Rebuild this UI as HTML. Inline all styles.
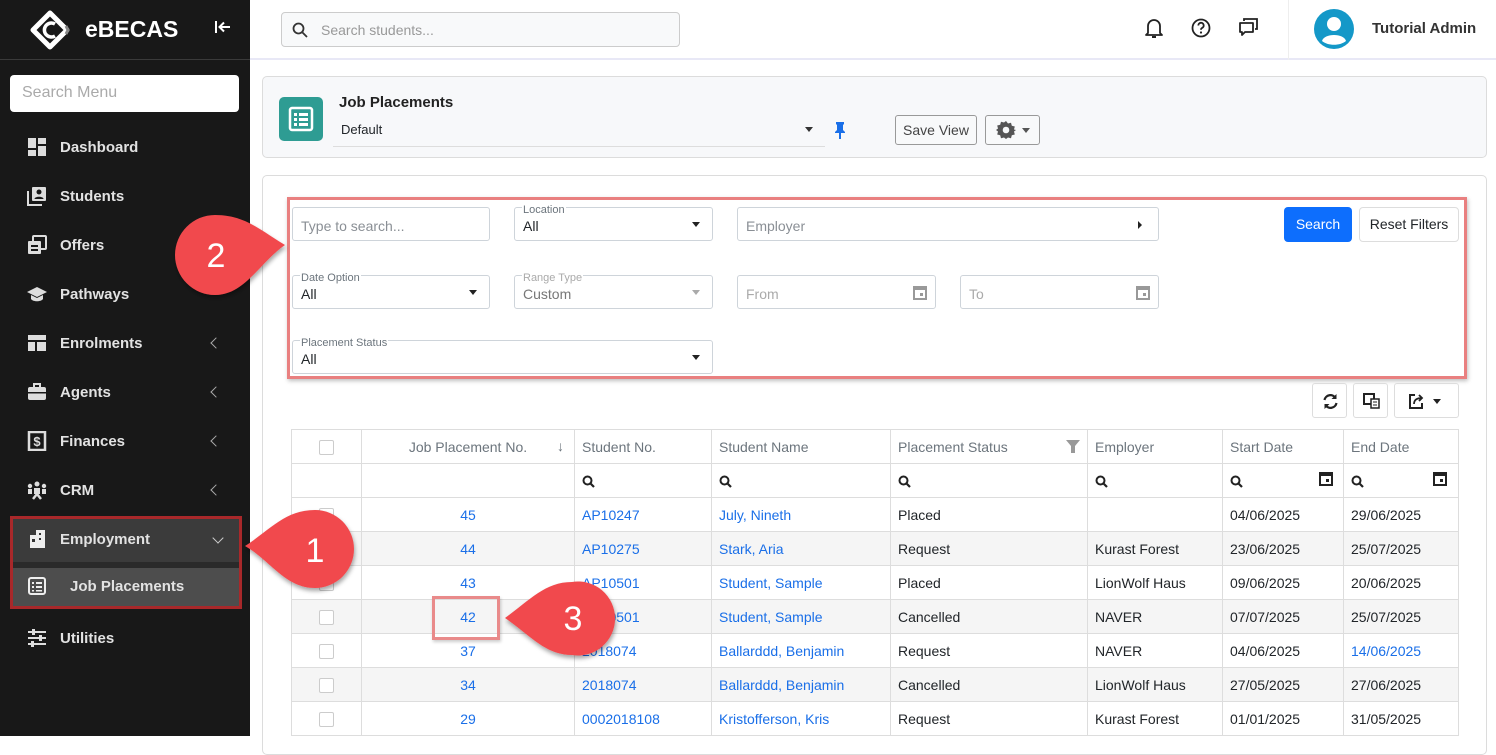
<!DOCTYPE html>
<html><head><meta charset="utf-8"><style>
*{box-sizing:border-box;margin:0;padding:0}
body{width:1496px;height:736px;overflow:hidden;font-family:"Liberation Sans",sans-serif;font-size:14px;color:#212529;background:#fff;position:relative}
.a{position:absolute}
#side{left:0;top:0;width:250px;height:736px;background:#181818;color:#e6e6e6}
.mi{position:absolute;left:27px;font-size:15px;font-weight:bold;color:#e2e2e2;display:flex;align-items:center}
.mi svg{width:20px;height:20px;margin-right:13px}
.chev{position:absolute;left:212px;width:8px;height:8px;border-left:1.5px solid #aaa;border-bottom:1.5px solid #aaa;transform:rotate(45deg)}
.inp{position:absolute;border:1px solid #ced4da;border-radius:3px;background:#fff;height:34px}
.lbl{position:absolute;top:-8px;left:7px;font-size:11px;color:#6c757d;background:#fff;padding:0 1px;line-height:13px}
.val{position:absolute;left:8px;top:10px;font-size:14px;color:#212529}
.ph{color:#8a8f95}
.caret{position:absolute;right:12px;top:14px;width:0;height:0;border-left:4px solid transparent;border-right:4px solid transparent;border-top:5px solid #222}
table{border-collapse:collapse;position:absolute;left:291px;top:429px;width:1167px;table-layout:fixed}
td{border:1px solid #ddd;height:34px;padding:0 7px;font-size:14px;white-space:nowrap;overflow:hidden}
thead td{color:#6c757d}
tr.g td{background:#f5f5f5}
.lnk{color:#1a6fe8}
.cb{display:inline-block;width:15px;height:15px;border:1px solid #ccc;border-radius:2px;background:#fff;vertical-align:middle}
.btn{position:absolute;border:1px solid #999;border-radius:3px;background:#f8f9fa;display:flex;align-items:center;justify-content:center}
.q{vertical-align:middle}
</style></head><body>
<div id="side" class="a">
 <svg class="a" style="left:30px;top:10px" width="40" height="40" viewBox="0 0 40 40"><path d="M20 3 L37 20 L20 37 L3 20 Z" fill="none" stroke="#fff" stroke-width="5" stroke-linejoin="round"/><path d="M25 14 A7 7 0 1 0 25 26" fill="none" stroke="#fff" stroke-width="3.5"/><path d="M36 16 L38 20 L36 24" stroke="#888" stroke-width="3" fill="none"/></svg>
 <div class="a" style="left:85px;top:16px;font-size:23px;font-weight:bold;color:#fff">eBECAS</div>
 <svg class="a" style="left:214px;top:20px" width="18" height="14" viewBox="0 0 18 14"><path d="M2 1v12" stroke="#fff" stroke-width="2"/><path d="M16 7H6M10 2.5L5.5 7 10 11.5" stroke="#fff" stroke-width="2" fill="none"/></svg>
 <div class="a" style="left:0;top:59px;width:250px;height:1px;background:#3a3a3a"></div>
 <div class="a" style="left:10px;top:75px;width:229px;height:37px;background:#fff;border-radius:4px;padding:9px 12px;color:#aaa;font-size:16px">Search Menu</div>
 <div class="mi" style="top:137px"><svg viewBox="0 0 20 20"><rect x="1" y="1" width="8" height="10" fill="#ddd"/><rect x="11" y="1" width="8" height="6" fill="#ddd"/><rect x="1" y="13" width="8" height="6" fill="#ddd"/><rect x="11" y="9" width="8" height="10" fill="#ddd"/></svg>Dashboard</div>
 <div class="mi" style="top:186px"><svg viewBox="0 0 20 20"><rect x="5" y="1" width="14" height="14" rx="1" fill="#ddd"/><path d="M1 5v14h14" stroke="#ddd" stroke-width="2" fill="none"/><circle cx="12" cy="6" r="2.5" fill="#181818"/><path d="M7.5 13c0-3 9-3 9 0z" fill="#181818"/></svg>Students</div>
 <div class="mi" style="top:235px"><svg viewBox="0 0 20 20"><rect x="6" y="1" width="13" height="13" rx="1" fill="none" stroke="#ddd" stroke-width="2"/><rect x="1" y="6" width="13" height="13" rx="1" fill="#ddd"/><rect x="4" y="10" width="7" height="2" fill="#181818"/><rect x="4" y="14" width="7" height="2" fill="#181818"/></svg>Offers</div>
 <div class="mi" style="top:284px"><svg viewBox="0 0 20 20"><path d="M10 3 L20 8 L10 13 L0 8 Z" fill="#ddd"/><path d="M4 11v4c2 3 10 3 12 0v-4l-6 3z" fill="#ddd"/></svg>Pathways</div>
 <div class="mi" style="top:333px"><svg viewBox="0 0 20 20"><rect x="1" y="2" width="18" height="5" fill="#ddd"/><rect x="1" y="9" width="7" height="9" fill="#ddd"/><rect x="10" y="9" width="9" height="9" fill="#ddd"/></svg>Enrolments</div><div class="chev" style="top:339px"></div>
 <div class="mi" style="top:382px"><svg viewBox="0 0 20 20"><rect x="1" y="5" width="18" height="13" rx="2" fill="#ddd"/><rect x="7" y="2" width="6" height="4" fill="none" stroke="#ddd" stroke-width="2"/><rect x="1" y="10" width="18" height="1.5" fill="#181818"/></svg>Agents</div><div class="chev" style="top:388px"></div>
 <div class="mi" style="top:431px"><svg viewBox="0 0 20 20"><rect x="2" y="1" width="16" height="18" fill="none" stroke="#ddd" stroke-width="2.5"/><text x="10" y="15" font-size="13" font-weight="bold" fill="#ddd" text-anchor="middle" font-family="Liberation Sans">$</text></svg>Finances</div><div class="chev" style="top:437px"></div>
 <div class="mi" style="top:480px"><svg viewBox="0 0 20 20"><circle cx="10" cy="4" r="2.5" fill="#ddd"/><circle cx="3" cy="6" r="2.2" fill="#ddd"/><circle cx="17" cy="6" r="2.2" fill="#ddd"/><rect x="7" y="8" width="6" height="6" fill="#ddd"/><rect x="1" y="9" width="4" height="5" fill="#ddd"/><rect x="15" y="9" width="4" height="5" fill="#ddd"/><path d="M6 19l4-5 4 5" stroke="#ddd" stroke-width="2.5" fill="none"/></svg>CRM</div><div class="chev" style="top:486px"></div>
 <div class="a" style="left:10px;top:516px;width:232px;height:93px;border:3px solid #a8282a;background:#2a2a2a"></div>
 <div class="a" style="left:13px;top:519px;width:226px;height:43px;background:#3b3b3b"></div>
 <div class="a" style="left:13px;top:568px;width:226px;height:38px;background:#4d4d4d"></div>
 <div class="mi" style="top:529px"><svg viewBox="0 0 20 20"><rect x="3" y="6" width="10" height="13" fill="#eee"/><rect x="9" y="1" width="9" height="18" fill="#eee"/><rect x="5" y="10" width="3" height="3" fill="#333"/><rect x="12" y="4" width="2" height="2" fill="#333"/><rect x="12" y="9" width="2" height="2" fill="#333"/></svg>Employment</div>
 <div class="a" style="left:214px;top:534px;width:8px;height:8px;border-right:1.5px solid #ccc;border-bottom:1.5px solid #ccc;transform:rotate(45deg)"></div>
 <div class="mi" style="top:576px"><svg viewBox="0 0 20 20"><rect x="2" y="2" width="16" height="16" rx="2" fill="none" stroke="#eee" stroke-width="2"/><rect x="5" y="6" width="2" height="2" fill="#eee"/><rect x="9" y="6" width="6" height="2" fill="#eee"/><rect x="5" y="10" width="2" height="2" fill="#eee"/><rect x="9" y="10" width="6" height="2" fill="#eee"/><rect x="5" y="14" width="2" height="1.5" fill="#eee"/><rect x="9" y="14" width="6" height="1.5" fill="#eee"/></svg><span style="margin-left:10px">Job Placements</span></div>
 <div class="mi" style="top:628px"><svg viewBox="0 0 20 20"><path d="M1 4h18M1 10h18M1 16h18" stroke="#ddd" stroke-width="2"/><rect x="5" y="1" width="3" height="6" fill="#ddd"/><rect x="12" y="7" width="3" height="6" fill="#ddd"/><rect x="4" y="13" width="3" height="6" fill="#ddd"/></svg>Utilities</div>
</div>

<!-- top bar -->
<div class="a" style="left:250px;top:0;width:1246px;height:60px;background:#fff;border-bottom:2px solid #e8e8f6"></div>
<div class="a" style="left:281px;top:12px;width:399px;height:35px;border:1px solid #ccc;border-radius:4px;background:#f8f9fa;padding:9px 0 0 39px;color:#999;font-size:14px">Search students...</div>
<svg class="a" style="left:292px;top:22px" width="16" height="16" viewBox="0 0 16 16"><circle cx="6.5" cy="6.5" r="5" fill="none" stroke="#333" stroke-width="1.8"/><path d="M10.5 10.5L15 15" stroke="#333" stroke-width="1.8"/></svg>
<svg class="a" style="left:1144px;top:17px" width="20" height="22" viewBox="0 0 20 22"><path d="M4 16V9a6 6 0 0 1 12 0v7l2 2H2z" fill="none" stroke="#222" stroke-width="1.8" stroke-linejoin="round"/><path d="M8 20h4" stroke="#222" stroke-width="2"/></svg>
<svg class="a" style="left:1191px;top:18px" width="20" height="20" viewBox="0 0 20 20"><circle cx="10" cy="10" r="8.5" fill="none" stroke="#222" stroke-width="1.8"/><path d="M7.3 7.5a2.7 2.7 0 1 1 3.7 2.5c-.8.4-1 .9-1 1.8" fill="none" stroke="#222" stroke-width="1.8"/><circle cx="10" cy="14.5" r="1.1" fill="#222"/></svg>
<svg class="a" style="left:1238px;top:17px" width="21" height="20" viewBox="0 0 21 20"><path d="M6 4V2h13v10h-2" fill="none" stroke="#222" stroke-width="1.8"/><path d="M2 6h13v9H7l-3 3v-3H2z" fill="none" stroke="#222" stroke-width="1.8" stroke-linejoin="round"/></svg>
<div class="a" style="left:1288px;top:0;width:1px;height:60px;background:#eee"></div>
<svg class="a" style="left:1314px;top:9px" width="40" height="40" viewBox="0 0 40 40"><circle cx="20" cy="20" r="20" fill="#1498c8"/><circle cx="20" cy="15" r="7" fill="#fff"/><path d="M8 32c2-8 22-8 24 0c-6 5-18 5-24 0z" fill="#fff"/></svg>
<div class="a" style="left:1372px;top:20px;font-size:15px;font-weight:bold;color:#333">Tutorial Admin</div>

<!-- panel1 -->
<div class="a" style="left:262px;top:76px;width:1225px;height:82px;background:#f7f8fa;border:1px solid #dcdcdc;border-radius:5px"></div>
<div class="a" style="left:279px;top:97px;width:44px;height:44px;background:#2e9c93;border-radius:5px"></div>
<svg class="a" style="left:288px;top:106px" width="26" height="26" viewBox="0 0 26 26"><rect x="2" y="2" width="22" height="22" rx="2" fill="none" stroke="#fff" stroke-width="2.5"/><rect x="6" y="7" width="3" height="3" fill="#fff"/><rect x="11" y="7" width="9" height="3" fill="#fff"/><rect x="6" y="12" width="3" height="3" fill="#fff"/><rect x="11" y="12" width="9" height="3" fill="#fff"/><rect x="6" y="17" width="3" height="3" fill="#fff"/><rect x="11" y="17" width="9" height="3" fill="#fff"/></svg>
<div class="a" style="left:339px;top:94px;font-size:15px;font-weight:bold;color:#222">Job Placements</div>
<div class="a" style="left:333px;top:118px;width:492px;height:29px;border-bottom:1px solid #ddd"></div>
<div class="a" style="left:341px;top:122px;font-size:13px">Default</div>
<div class="a" style="left:805px;top:127px;border-left:4px solid transparent;border-right:4px solid transparent;border-top:5px solid #333"></div>
<svg class="a" style="left:834px;top:121px" width="12" height="18" viewBox="0 0 12 18"><path d="M2 1h8v2l-1 1v5l2 2v1H1v-1l2-2V4L2 3z" fill="#1a6fe8"/><rect x="5" y="12" width="2" height="6" fill="#1a6fe8"/></svg>
<div class="btn" style="left:895px;top:115px;width:82px;height:30px;font-size:14px;color:#444">Save View</div>
<div class="btn" style="left:985px;top:115px;width:55px;height:30px"><svg width="20" height="20" viewBox="0 0 20 20"><path d="M10 1l2 2.5 3-.8.8 3 3 .8-.8 3L20 10l-2 1.5.8 3-3 .8-.8 3-3-.8L10 19l-2-1.5-3 .8-.8-3-3-.8.8-3L0 10l2-1.5-.8-3 3-.8.8-3 3 .8z" fill="#555"/><circle cx="10" cy="10" r="3.3" fill="#f8f9fa"/></svg><span style="margin-left:6px;border-left:4px solid transparent;border-right:4px solid transparent;border-top:5px solid #555"></span></div>

<!-- panel2 -->
<div class="a" style="left:262px;top:175px;width:1225px;height:580px;background:#fff;border:1px solid #dcdcdc;border-radius:5px"></div>
<div class="a" style="left:287px;top:197px;width:1180px;height:182px;border:3px solid #e98080;box-shadow:1px 2px 4px rgba(0,0,0,.25)"></div>
<div class="inp" style="left:292px;top:207px;width:198px"><span class="val ph">Type to search...</span></div>
<div class="inp" style="left:514px;top:207px;width:199px"><span class="lbl" style="top:-4px">Location</span><span class="val" style="top:10px">All</span><span class="caret"></span></div>
<div class="inp" style="left:737px;top:207px;width:422px"><span class="val ph">Employer</span><span class="a" style="right:16px;top:13px;border-top:4px solid transparent;border-bottom:4px solid transparent;border-left:4px solid #222"></span></div>
<div class="a" style="left:1284px;top:207px;width:68px;height:35px;background:#0d6efd;border-radius:4px;color:#fff;text-align:center;line-height:35px">Search</div>
<div class="a" style="left:1359px;top:207px;width:100px;height:35px;border:1px solid #ddd;border-radius:4px;text-align:center;line-height:33px">Reset Filters</div>
<div class="inp" style="left:292px;top:275px;width:198px"><span class="lbl" style="top:-4px">Date Option</span><span class="val" style="top:10px">All</span><span class="caret"></span></div>
<div class="inp" style="left:514px;top:275px;width:199px"><span class="lbl" style="top:-4px;color:#aaa">Range Type</span><span class="val" style="top:10px;color:#777">Custom</span><span class="caret" style="border-top-color:#aaa"></span></div>
<div class="inp" style="left:737px;top:275px;width:199px"><span class="val ph" style="color:#aaa">From</span><svg class="a" style="right:8px;top:9px" width="14" height="15" viewBox="0 0 14 15"><rect x="1" y="2" width="12" height="12" fill="none" stroke="#999" stroke-width="2"/><rect x="1" y="2" width="12" height="3" fill="#999"/><rect x="7" y="8" width="3" height="3" fill="#999"/></svg></div>
<div class="inp" style="left:960px;top:275px;width:199px"><span class="val ph" style="color:#aaa">To</span><svg class="a" style="right:8px;top:9px" width="14" height="15" viewBox="0 0 14 15"><rect x="1" y="2" width="12" height="12" fill="none" stroke="#999" stroke-width="2"/><rect x="1" y="2" width="12" height="3" fill="#999"/><rect x="7" y="8" width="3" height="3" fill="#999"/></svg></div>
<div class="inp" style="left:292px;top:340px;width:421px"><span class="lbl" style="top:-4px">Placement Status</span><span class="val" style="top:10px">All</span><span class="caret"></span></div>

<div class="a" style="left:1312px;top:383px;width:35px;height:35px;border:1px solid #ddd;border-radius:3px"><svg style="margin:9px" width="17" height="17" viewBox="0 0 17 17"><path d="M2.5 7A6 6 0 0 1 13.5 5" fill="none" stroke="#222" stroke-width="2.2"/><path d="M14.5 1v5h-5z" fill="#222"/><path d="M14.5 10A6 6 0 0 1 3.5 12" fill="none" stroke="#222" stroke-width="2.2"/><path d="M2.5 16v-5h5z" fill="#222"/></svg></div>
<div class="a" style="left:1353px;top:383px;width:35px;height:35px;border:1px solid #ddd;border-radius:3px"><svg style="margin:9px" width="17" height="16" viewBox="0 0 17 16"><rect x="1" y="1" width="10" height="10" fill="none" stroke="#222" stroke-width="2"/><rect x="8" y="6" width="8" height="9" fill="#fff" stroke="#222" stroke-width="1.5"/><path d="M10 9h4M10 12h4" stroke="#222"/></svg></div>
<div class="a" style="left:1394px;top:383px;width:65px;height:35px;border:1px solid #ddd;border-radius:3px"><svg style="position:absolute;left:14px;top:9px" width="16" height="16" viewBox="0 0 16 16"><path d="M6 2H1v13h12v-5" fill="none" stroke="#222" stroke-width="2"/><path d="M5 11c0-5 4-6 8-6M10 2l3 3-3 3" fill="none" stroke="#222" stroke-width="1.8"/></svg><span class="a" style="left:38px;top:15px;border-left:4px solid transparent;border-right:4px solid transparent;border-top:5px solid #222"></span></div>

<table>
<colgroup><col style="width:70px"><col style="width:213px"><col style="width:137px"><col style="width:179px"><col style="width:197px"><col style="width:135px"><col style="width:121px"><col style="width:115px"></colgroup>
<thead>
<tr><td style="text-align:center"><span class="cb"></span></td><td style="text-align:center;position:relative">Job Placement No.<span style="position:absolute;right:10px;top:8px">↓</span></td><td>Student No.</td><td>Student Name</td><td style="position:relative">Placement Status<svg style="position:absolute;right:7px;top:10px" width="14" height="13" viewBox="0 0 14 13"><path d="M0 0h14L9 6v7H5V6z" fill="#999"/></svg></td><td>Employer</td><td>Start Date</td><td>End Date</td></tr>
<tr><td></td><td></td>
<td><svg class="q" width="13" height="13" viewBox="0 0 13 13"><circle cx="5.5" cy="5.5" r="4" fill="none" stroke="#222" stroke-width="2"/><path d="M8.5 8.5L12 12" stroke="#222" stroke-width="2.2"/></svg></td>
<td><svg class="q" width="13" height="13" viewBox="0 0 13 13"><circle cx="5.5" cy="5.5" r="4" fill="none" stroke="#222" stroke-width="2"/><path d="M8.5 8.5L12 12" stroke="#222" stroke-width="2.2"/></svg></td>
<td><svg class="q" width="13" height="13" viewBox="0 0 13 13"><circle cx="5.5" cy="5.5" r="4" fill="none" stroke="#222" stroke-width="2"/><path d="M8.5 8.5L12 12" stroke="#222" stroke-width="2.2"/></svg></td>
<td><svg class="q" width="13" height="13" viewBox="0 0 13 13"><circle cx="5.5" cy="5.5" r="4" fill="none" stroke="#222" stroke-width="2"/><path d="M8.5 8.5L12 12" stroke="#222" stroke-width="2.2"/></svg></td>
<td><svg class="q" width="13" height="13" viewBox="0 0 13 13"><circle cx="5.5" cy="5.5" r="4" fill="none" stroke="#222" stroke-width="2"/><path d="M8.5 8.5L12 12" stroke="#222" stroke-width="2.2"/></svg></td>
<td><svg class="q" width="13" height="13" viewBox="0 0 13 13"><circle cx="5.5" cy="5.5" r="4" fill="none" stroke="#222" stroke-width="2"/><path d="M8.5 8.5L12 12" stroke="#222" stroke-width="2.2"/></svg></td></tr>
</thead>
<tbody>
<tr><td style="text-align:center"><span class="cb"></span></td><td class="lnk" style="text-align:center">45</td><td class="lnk">AP10247</td><td class="lnk">July, Nineth</td><td>Placed</td><td></td><td>04/06/2025</td><td>29/06/2025</td></tr>
<tr class="g"><td style="text-align:center"><span class="cb"></span></td><td class="lnk" style="text-align:center">44</td><td class="lnk">AP10275</td><td class="lnk">Stark, Aria</td><td>Request</td><td>Kurast Forest</td><td>23/06/2025</td><td>25/07/2025</td></tr>
<tr><td style="text-align:center"><span class="cb"></span></td><td class="lnk" style="text-align:center">43</td><td class="lnk">AP10501</td><td class="lnk">Student, Sample</td><td>Placed</td><td>LionWolf Haus</td><td>09/06/2025</td><td>20/06/2025</td></tr>
<tr class="g"><td style="text-align:center"><span class="cb"></span></td><td class="lnk" style="text-align:center">42</td><td class="lnk">AP10501</td><td class="lnk">Student, Sample</td><td>Cancelled</td><td>NAVER</td><td>07/07/2025</td><td>25/07/2025</td></tr>
<tr><td style="text-align:center"><span class="cb"></span></td><td class="lnk" style="text-align:center">37</td><td class="lnk">2018074</td><td class="lnk">Ballarddd, Benjamin</td><td>Request</td><td>NAVER</td><td>04/06/2025</td><td class="lnk">14/06/2025</td></tr>
<tr class="g"><td style="text-align:center"><span class="cb"></span></td><td class="lnk" style="text-align:center">34</td><td class="lnk">2018074</td><td class="lnk">Ballarddd, Benjamin</td><td>Cancelled</td><td>LionWolf Haus</td><td>27/05/2025</td><td>27/06/2025</td></tr>
<tr><td style="text-align:center"><span class="cb"></span></td><td class="lnk" style="text-align:center">29</td><td class="lnk">0002018108</td><td class="lnk">Kristofferson, Kris</td><td>Request</td><td>Kurast Forest</td><td>01/01/2025</td><td>31/05/2025</td></tr>
</tbody></table>
<svg class="a" style="left:1319px;top:471px" width="14" height="15" viewBox="0 0 14 15"><rect x="1" y="2" width="12" height="12" fill="none" stroke="#222" stroke-width="2"/><rect x="1" y="2" width="12" height="3" fill="#222"/><rect x="7" y="8" width="3" height="3" fill="#222"/></svg>
<svg class="a" style="left:1433px;top:471px" width="14" height="15" viewBox="0 0 14 15"><rect x="1" y="2" width="12" height="12" fill="none" stroke="#222" stroke-width="2"/><rect x="1" y="2" width="12" height="3" fill="#222"/><rect x="7" y="8" width="3" height="3" fill="#222"/></svg>

<div class="a" style="left:432px;top:596px;width:68px;height:44px;border:3px solid #e98a8a;box-shadow:1px 2px 3px rgba(0,0,0,.2)"></div>

<!-- callouts -->
<svg class="a" style="left:0;top:0" width="1496" height="736" viewBox="0 0 1496 736">
<defs><filter id="s"><feDropShadow dx="1" dy="3" stdDeviation="2" flood-opacity=".35"/></filter></defs>
<g filter="url(#s)" fill="#f14a4d">
<path d="M285 245 C260 230 245 215 215 215 A40 40 0 1 0 215 295 C245 295 260 262 285 245Z"/>
<path d="M245 546 C270 530 285 510 315 510 A39 39 0 1 1 315 588 C285 588 270 560 245 546Z"/>
<path d="M505 618 C530 600 545 582 572 582 A37 37 0 1 1 572 655 C545 655 530 635 505 618Z"/>
</g>
<g fill="#fff" font-family="Liberation Sans" font-size="34" text-anchor="middle">
<text x="216" y="267">2</text><text x="315" y="562">1</text><text x="573" y="630">3</text>
</g>
</svg>
</body></html>
